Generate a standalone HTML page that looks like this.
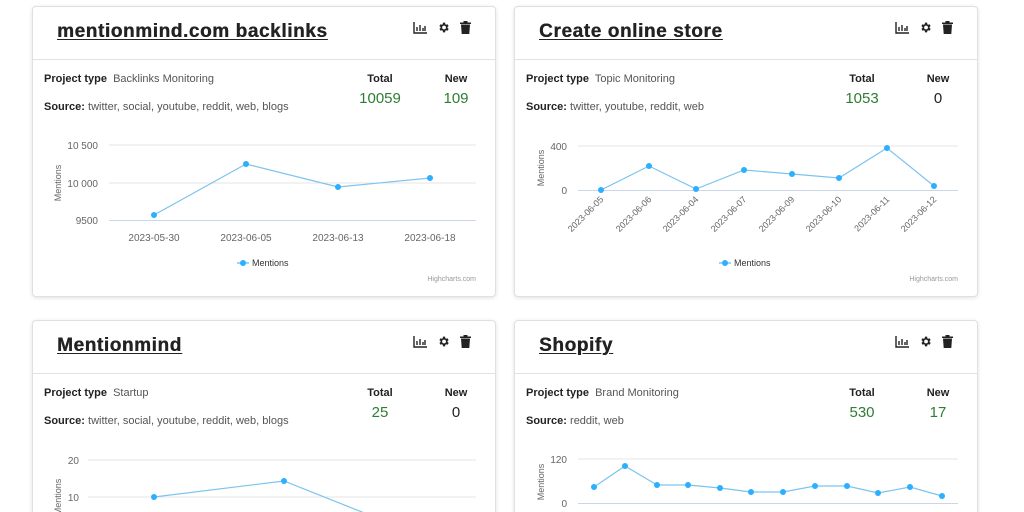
<!DOCTYPE html>
<html><head><meta charset="utf-8"><style>
*{margin:0;padding:0;box-sizing:border-box}
html,body{width:1024px;height:512px;overflow:hidden}
body{background:#fff;font-family:"Liberation Sans",Arial,sans-serif;position:relative}
.card{position:absolute;width:464px;height:291px;border:1px solid #e0e0e0;border-radius:4px;background:#fff;box-shadow:0 1px 4px rgba(0,0,0,.12)}
.hd{position:absolute;left:0;right:0;top:0;height:53px;border-bottom:1px solid #e2e2e2}
.t{position:absolute;left:24px;top:14px;font-size:19px;font-weight:bold;color:#222;text-decoration:underline;letter-spacing:.6px;text-underline-offset:2px;text-shadow:0.4px 0 0 #222}
.ic{position:absolute;top:14px;right:24px;display:flex;gap:10px;align-items:center}
.l{position:absolute;left:11px;font-size:11px;color:#555}
.l b{color:#222}
.st{position:absolute;text-align:center;font-size:11px;font-weight:bold;color:#222;width:60px}
.sv{position:absolute;text-align:center;font-size:15px;color:#2e7d32;width:70px}
svg.ch{position:absolute;left:0;top:0;overflow:visible}
svg text{font-family:"Liberation Sans",Arial,sans-serif}
</style></head><body>

<div class="card" style="left:32px;top:6px">
 <div class="hd"><div class="t">mentionmind.com backlinks</div>
 <div class="ic">
  <svg width="14" height="12" viewBox="0 0 14 12"><path d="M1 0v11h13M4 9V5M7 9V3M10 9V6M12 9V4" stroke="#222" stroke-width="1.4" fill="none"/></svg>
  <svg width="13" height="13" viewBox="0 0 24 24"><path fill="#222" d="M19.4 13a7.5 7.5 0 0 0 0-2l2.1-1.6-2-3.5-2.5 1a7 7 0 0 0-1.7-1L15 3h-4l-.4 2.9a7 7 0 0 0-1.7 1l-2.5-1-2 3.5L6.6 11a7.5 7.5 0 0 0 0 2l-2.1 1.600 2 3.5 2.5-1a7 7 0 0 0 1.7 1L11 21h4l.4-2.9a7 7 0 0 0 1.7-1l2.5 1 2-3.5zM13 15.5a3.5 3.5 0 1 1 0-7 3.5 3.5 0 0 1 0 7z"/></svg>
  <svg width="11" height="13" viewBox="0 0 11 13"><path fill="#222" d="M0 1.5h11v1.5H0zM3.5 0h4v1.5h-4zM1 3.5h9l-.7 9.5H1.7z"/></svg>
 </div></div>
 <div class="l" style="top:66px"><b>Project type</b>&nbsp; Backlinks Monitoring</div>
 <div class="l" style="top:94px"><b>Source:</b> twitter, social, youtube, reddit, web, blogs</div>
 <div class="st" style="left:317px;top:66px">Total</div><div class="sv" style="left:312px;top:83px">10059</div>
 <div class="st" style="left:393px;top:66px">New</div><div class="sv" style="left:388px;top:83px">109</div>
</div>

<div class="card" style="left:514px;top:6px">
 <div class="hd"><div class="t">Create online store</div>
 <div class="ic">
  <svg width="14" height="12" viewBox="0 0 14 12"><path d="M1 0v11h13M4 9V5M7 9V3M10 9V6M12 9V4" stroke="#222" stroke-width="1.4" fill="none"/></svg>
  <svg width="13" height="13" viewBox="0 0 24 24"><path fill="#222" d="M19.4 13a7.5 7.5 0 0 0 0-2l2.1-1.6-2-3.5-2.5 1a7 7 0 0 0-1.7-1L15 3h-4l-.4 2.9a7 7 0 0 0-1.7 1l-2.5-1-2 3.5L6.6 11a7.5 7.5 0 0 0 0 2l-2.1 1.6 2 3.5 2.5-1a7 7 0 0 0 1.7 1L11 21h4l.4-2.9a7 7 0 0 0 1.7-1l2.5 1 2-3.5zM13 15.5a3.5 3.5 0 1 1 0-7 3.5 3.5 0 0 1 0 7z"/></svg>
  <svg width="11" height="13" viewBox="0 0 11 13"><path fill="#222" d="M0 1.5h11v1.5H0zM3.5 0h4v1.5h-4zM1 3.5h9l-.7 9.5H1.7z"/></svg>
 </div></div>
 <div class="l" style="top:66px"><b>Project type</b>&nbsp; Topic Monitoring</div>
 <div class="l" style="top:94px"><b>Source:</b> twitter, youtube, reddit, web</div>
 <div class="st" style="left:317px;top:66px">Total</div><div class="sv" style="left:312px;top:83px">1053</div>
 <div class="st" style="left:393px;top:66px">New</div><div class="sv" style="left:388px;top:83px;color:#222">0</div>
</div>

<div class="card" style="left:32px;top:320px">
 <div class="hd"><div class="t">Mentionmind</div>
 <div class="ic">
  <svg width="14" height="12" viewBox="0 0 14 12"><path d="M1 0v11h13M4 9V5M7 9V3M10 9V6M12 9V4" stroke="#222" stroke-width="1.4" fill="none"/></svg>
  <svg width="13" height="13" viewBox="0 0 24 24"><path fill="#222" d="M19.4 13a7.5 7.5 0 0 0 0-2l2.1-1.6-2-3.5-2.5 1a7 7 0 0 0-1.7-1L15 3h-4l-.4 2.9a7 7 0 0 0-1.7 1l-2.5-1-2 3.5L6.6 11a7.5 7.5 0 0 0 0 2l-2.1 1.6 2 3.5 2.5-1a7 7 0 0 0 1.7 1L11 21h4l.4-2.9a7 7 0 0 0 1.7-1l2.5 1 2-3.5zM13 15.5a3.5 3.5 0 1 1 0-7 3.5 3.5 0 0 1 0 7z"/></svg>
  <svg width="11" height="13" viewBox="0 0 11 13"><path fill="#222" d="M0 1.5h11v1.5H0zM3.5 0h4v1.5h-4zM1 3.5h9l-.7 9.5H1.7z"/></svg>
 </div></div>
 <div class="l" style="top:66px"><b>Project type</b>&nbsp; Startup</div>
 <div class="l" style="top:94px"><b>Source:</b> twitter, social, youtube, reddit, web, blogs</div>
 <div class="st" style="left:317px;top:66px">Total</div><div class="sv" style="left:312px;top:83px">25</div>
 <div class="st" style="left:393px;top:66px">New</div><div class="sv" style="left:388px;top:83px;color:#222">0</div>
</div>

<div class="card" style="left:514px;top:320px">
 <div class="hd"><div class="t">Shopify</div>
 <div class="ic">
  <svg width="14" height="12" viewBox="0 0 14 12"><path d="M1 0v11h13M4 9V5M7 9V3M10 9V6M12 9V4" stroke="#222" stroke-width="1.4" fill="none"/></svg>
  <svg width="13" height="13" viewBox="0 0 24 24"><path fill="#222" d="M19.4 13a7.5 7.5 0 0 0 0-2l2.1-1.6-2-3.5-2.5 1a7 7 0 0 0-1.7-1L15 3h-4l-.4 2.9a7 7 0 0 0-1.7 1l-2.5-1-2 3.5L6.6 11a7.5 7.5 0 0 0 0 2l-2.1 1.6 2 3.5 2.5-1a7 7 0 0 0 1.7 1L11 21h4l.4-2.9a7 7 0 0 0 1.7-1l2.5 1 2-3.5zM13 15.5a3.5 3.5 0 1 1 0-7 3.5 3.5 0 0 1 0 7z"/></svg>
  <svg width="11" height="13" viewBox="0 0 11 13"><path fill="#222" d="M0 1.5h11v1.5H0zM3.5 0h4v1.5h-4zM1 3.5h9l-.7 9.5H1.7z"/></svg>
 </div></div>
 <div class="l" style="top:66px"><b>Project type</b>&nbsp; Brand Monitoring</div>
 <div class="l" style="top:94px"><b>Source:</b> reddit, web</div>
 <div class="st" style="left:317px;top:66px">Total</div><div class="sv" style="left:312px;top:83px">530</div>
 <div class="st" style="left:393px;top:66px">New</div><div class="sv" style="left:388px;top:83px">17</div>
</div>

<svg class="ch" width="1024" height="512" font-size="10" fill="#666">
 <g stroke="#e6e6e6"><line x1="109" y1="145" x2="476" y2="145"/><line x1="109" y1="183" x2="476" y2="183"/></g>
 <line x1="109" y1="220.5" x2="476" y2="220.5" stroke="#ccd6eb"/>
 <g text-anchor="end"><text x="98" y="149">10 500</text><text x="98" y="187">10 000</text><text x="98" y="224">9500</text></g>
 <text transform="translate(61,183) rotate(-90)" text-anchor="middle" font-size="9">Mentions</text>
 <g text-anchor="middle"><text x="154" y="241">2023-05-30</text><text x="246" y="241">2023-06-05</text><text x="338" y="241">2023-06-13</text><text x="430" y="241">2023-06-18</text></g>
 <polyline points="154,215 246,164 338,187 430,178" fill="none" stroke="#7cc3ee" stroke-width="1.2"/>
 <g fill="#2caffe"><circle cx="154" cy="215" r="3"/><circle cx="246" cy="164" r="3"/><circle cx="338" cy="187" r="3"/><circle cx="430" cy="178" r="3"/></g>
 <line x1="237" y1="263" x2="249" y2="263" stroke="#2caffe"/><circle cx="243" cy="263" r="3" fill="#2caffe"/>
 <text x="252" y="266" font-size="9" fill="#333">Mentions</text>
 <text x="476" y="281" text-anchor="end" font-size="7" fill="#999">Highcharts.com</text>

 <line x1="578" y1="146" x2="958" y2="146" stroke="#e6e6e6"/>
 <line x1="578" y1="190.5" x2="958" y2="190.5" stroke="#ccd6eb"/>
 <g text-anchor="end"><text x="567" y="150">400</text><text x="567" y="194">0</text></g>
 <text transform="translate(544,168) rotate(-90)" text-anchor="middle" font-size="9">Mentions</text>
 <g text-anchor="end" font-size="9">
  <text transform="translate(604,200) rotate(-45)">2023-06-05</text>
  <text transform="translate(652,200) rotate(-45)">2023-06-06</text>
  <text transform="translate(699,200) rotate(-45)">2023-06-04</text>
  <text transform="translate(747,200) rotate(-45)">2023-06-07</text>
  <text transform="translate(795,200) rotate(-45)">2023-06-09</text>
  <text transform="translate(842,200) rotate(-45)">2023-06-10</text>
  <text transform="translate(890,200) rotate(-45)">2023-06-11</text>
  <text transform="translate(937,200) rotate(-45)">2023-06-12</text>
 </g>
 <polyline points="601,190 649,166 696,189 744,170 792,174 839,178 887,148 934,186" fill="none" stroke="#7cc3ee" stroke-width="1.2"/>
 <g fill="#2caffe"><circle cx="601" cy="190" r="3"/><circle cx="649" cy="166" r="3"/><circle cx="696" cy="189" r="3"/><circle cx="744" cy="170" r="3"/><circle cx="792" cy="174" r="3"/><circle cx="839" cy="178" r="3"/><circle cx="887" cy="148" r="3"/><circle cx="934" cy="186" r="3"/></g>
 <line x1="719" y1="263" x2="731" y2="263" stroke="#2caffe"/><circle cx="725" cy="263" r="3" fill="#2caffe"/>
 <text x="734" y="266" font-size="9" fill="#333">Mentions</text>
 <text x="958" y="281" text-anchor="end" font-size="7" fill="#999">Highcharts.com</text>

 <g stroke="#e6e6e6"><line x1="88" y1="460" x2="476" y2="460"/><line x1="88" y1="497" x2="476" y2="497"/></g>
 <g text-anchor="end"><text x="79" y="464">20</text><text x="79" y="501">10</text></g>
 <text transform="translate(61,497) rotate(-90)" text-anchor="middle" font-size="9">Mentions</text>
 <polyline points="154,497 284,481 382,520" fill="none" stroke="#7cc3ee" stroke-width="1.2"/>
 <g fill="#2caffe"><circle cx="154" cy="497" r="3"/><circle cx="284" cy="481" r="3"/></g>

 <line x1="578" y1="459" x2="958" y2="459" stroke="#e6e6e6"/>
 <line x1="578" y1="503.5" x2="958" y2="503.5" stroke="#ccd6eb"/>
 <g text-anchor="end"><text x="567" y="463">120</text><text x="567" y="507">0</text></g>
 <text transform="translate(544,482) rotate(-90)" text-anchor="middle" font-size="9">Mentions</text>
 <polyline points="594,487 625,466 657,485 688,485 720,488 751,492 783,492 815,486 847,486 878,493 910,487 942,496" fill="none" stroke="#7cc3ee" stroke-width="1.2"/>
 <g fill="#2caffe"><circle cx="594" cy="487" r="3"/><circle cx="625" cy="466" r="3"/><circle cx="657" cy="485" r="3"/><circle cx="688" cy="485" r="3"/><circle cx="720" cy="488" r="3"/><circle cx="751" cy="492" r="3"/><circle cx="783" cy="492" r="3"/><circle cx="815" cy="486" r="3"/><circle cx="847" cy="486" r="3"/><circle cx="878" cy="493" r="3"/><circle cx="910" cy="487" r="3"/><circle cx="942" cy="496" r="3"/></g>
</svg>
</body></html>
